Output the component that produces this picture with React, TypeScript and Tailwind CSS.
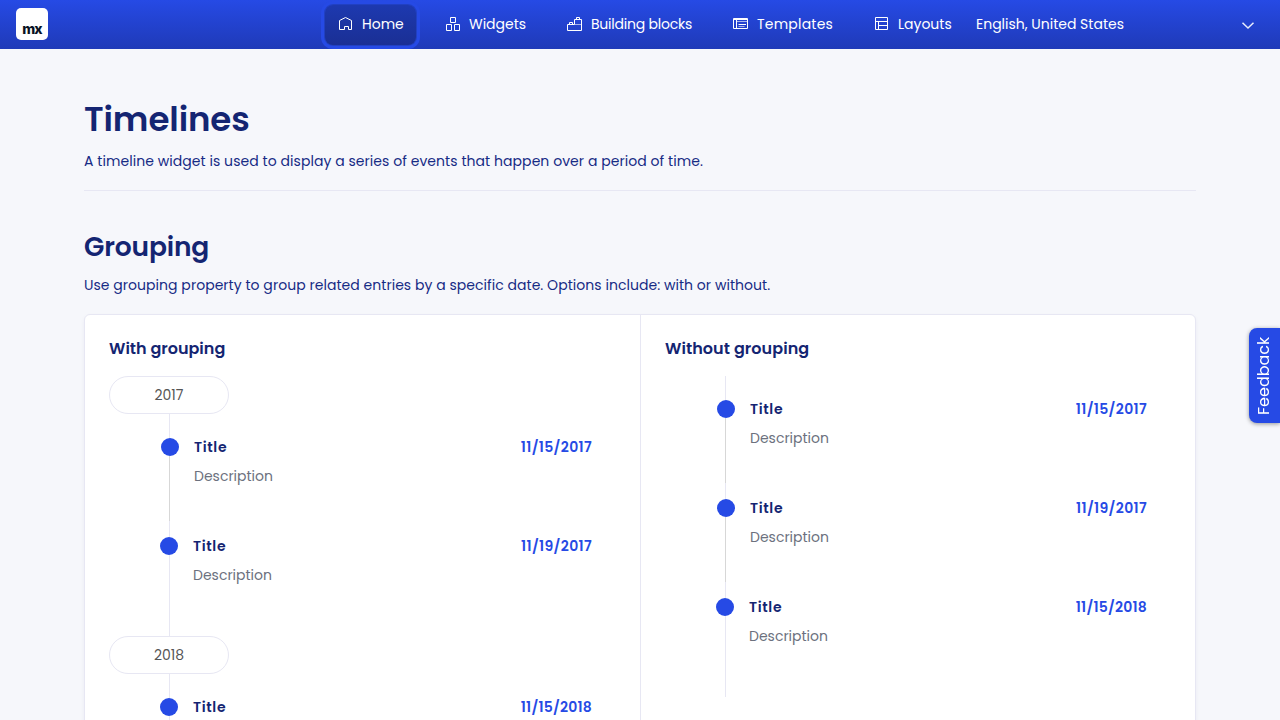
import type { ReactNode } from "react";

type Entry = { date: string; kind: "middle" | "last"; first?: boolean };

function Icon({ children, className = "w-[15px]" }: { children: ReactNode; className?: string }) {
  return (
    <svg className={`h-[14px] shrink-0 overflow-visible ${className}`} fill="none" stroke="#fff" strokeWidth="1" aria-hidden="true">
      {children}
    </svg>
  );
}

function TopBar() {
  return (
    <header className="flex h-[49px] items-start bg-linear-to-b from-[#264ae5] to-[#1f3ab8] text-sm text-white">
      <div className="mt-2 ml-4 flex size-8 shrink-0 items-end justify-center rounded-[5px] bg-white pb-[3px]">
        <span className="font-['Inter'] text-[14px] leading-[16px] font-extrabold tracking-[-1px] text-[#0a1325]">mx</span>
      </div>
      <nav className="flex h-[48px] items-center whitespace-nowrap">
        <a className="mt-[2px] ml-[277px] flex h-[40px] w-[91px] items-center gap-[9px] rounded-lg bg-linear-to-b from-[#1d39b0] to-[#1a2f94] pb-[2px] pl-[14px] shadow-[0_0_0_1px_#2140c2,0_0_0_4px_#264ae5]">
          <Icon className="w-[14px]">
            <path d="M.5 12.5v-9L6.500.5l6 3v9h-3v-3h-4v3z" />
          </Icon>
          <span>Home</span>
        </a>
        <a className="ml-[30px] flex w-[80px] items-center gap-[8px]">
          <Icon>
            <path d="M4.5.5h5v5h-5zM.5 7.5h5v6h-5zM8.5 7.5h5v6h-5z" />
          </Icon>
          <span>Widgets</span>
        </a>
        <a className="ml-[41px] flex w-[125px] items-center gap-[9px]">
          <Icon>
            <path d="M.5 13.5v-6h7v-5h7v11zM2.5 7.500v-2h3v2M9.500 2.5v-2h3v2" />
            <path d="M7.500 7.500h7" opacity=".6" />
          </Icon>
          <span className="tracking-[-0.22px]">Building blocks</span>
        </a>
        <a className="ml-[41px] flex w-[100px] items-center gap-[9px]">
          <Icon>
            <path d="M.5 1.5h14v10H.5zM.5 2.500h14M3.5 3v8M5.5 7.5h7.500" />
            <path d="M4 4.500h10M5.500 9.500h6" opacity=".6" />
          </Icon>
          <span className="tracking-[0.22px]">Templates</span>
        </a>
        <a className="ml-[42px] flex w-[77px] items-center gap-[9px]">
          <Icon className="w-[14px]">
            <path d="M.5.5h12v12H.5zM.5 4.500h12M3.500 4.500v8M3.500 8.500h9" />
          </Icon>
          <span>Layouts</span>
        </a>
        <span className="ml-[24px]">English, United States</span>
      </nav>
      <svg className="mt-[22px] mr-[26px] ml-auto h-[7px] w-3 overflow-visible" fill="none" stroke="#e9edfc" strokeWidth="1.5" aria-hidden="true">
        <path d="M.5.700 6 6l5.500-5.300" />
      </svg>
    </header>
  );
}

function GroupLabel({ year }: { year: string }) {
  return (
    <div className="flex h-[38px] w-[120px] items-center justify-center rounded-full border border-[#e7e7f3] text-sm text-[#555]">
      {year}
    </div>
  );
}

function TimelineItem({ date, kind, first }: Entry) {
  const middle = kind === "middle";
  return (
    <div className="flex">
      <div className="flex w-[18px] shrink-0 flex-col">
        <div className={`ml-[9px] w-px bg-[#e7e7f3] ${first ? "h-6" : "h-4"}`} />
        <div className={`size-[18px] shrink-0 rounded-full bg-[#264ae5] ${middle ? "ml-px" : ""}`} />
        <div className={`ml-[9px] w-px ${middle ? "h-[65px] bg-[#d7d7d7]" : "h-[81px] bg-[#e7e7f3]"}`} />
      </div>
      <div className={`flex-1 ${first ? "pt-[22px]" : "pt-[14px]"} ${middle ? "pl-4" : "pl-[15px]"}`}>
        <div className="flex h-[22px] items-center justify-between text-sm font-semibold">
          <span className="tracking-[0.65px] text-[#142572]">Title</span>
          <span className={`text-[#264ae5] ${date.endsWith("8") ? "tracking-[0.22px]" : "tracking-[0.35px]"}`}>{date}</span>
        </div>
        <p className="mt-[7px] text-sm leading-[22px] text-[#6c717e]">Description</p>
      </div>
    </div>
  );
}

function Entries({ items }: { items: Entry[] }) {
  return (
    <div className="pr-6 pl-[51px]">
      {items.map((item, i) => (
        <TimelineItem key={i} {...item} />
      ))}
    </div>
  );
}

export default function App() {
  return (
    <div className="h-screen overflow-hidden bg-[#f6f7fb] font-['Poppins','Inter',sans-serif] text-[#142572]">
      <TopBar />
      <main className="mx-auto w-[1112px] pt-[46px]">
        <h1 className="text-[34px] leading-[48px] font-semibold tracking-[-0.1px]">Timelines</h1>
        <p className="mt-[7px] text-sm leading-[22px] tracking-[0.056px] text-[#172b85]">
          A timeline widget is used to display a series of events that happen over a period of time.
        </p>
        <hr className="mt-[18px] border-[#e7e7f3]" />
        <h2 className="mt-[38px] text-[26.500px] leading-9 font-semibold tracking-[-0.15px]">Grouping</h2>
        <p className="mt-[9px] text-sm leading-[22px] tracking-[0.04px] text-[#172b85]">
          Use grouping property to group related entries by a specific date. Options include: with or without.
        </p>
        <div className="mt-[18px] grid h-[520px] grid-cols-[556px_1fr] rounded-md border border-[#e7e7f3] bg-white shadow-[0_2px_4px_rgba(20,37,114,0.05)]">
          <section className="border-r border-[#e7e7f3] px-6 pt-[22px]">
            <h3 className="mb-[15px] text-base leading-6 font-semibold">With grouping</h3>
            <GroupLabel year="2017" />
            <Entries
              items={[
                { date: "11/15/2017", kind: "middle", first: true },
                { date: "11/19/2017", kind: "last" },
              ]}
            />
            <GroupLabel year="2018" />
            <Entries items={[{ date: "11/15/2018", kind: "last", first: true }]} />
          </section>
          <section className="px-6 pt-[22px]">
            <h3 className="mb-[15px] text-base leading-6 font-semibold tracking-[0.06px]">Without grouping</h3>
            <Entries
              items={[
                { date: "11/15/2017", kind: "middle", first: true },
                { date: "11/19/2017", kind: "middle" },
                { date: "11/15/2018", kind: "last" },
              ]}
            />
          </section>
        </div>
      </main>
      <button className="fixed top-[328px] right-0 flex h-[95px] w-[31px] rotate-180 items-center justify-center rounded-r-lg bg-[#264ae5] text-base text-white shadow-[0_-1px_4px_rgba(0,0,0,0.4)] [writing-mode:vertical-rl]">
        Feedback
      </button>
    </div>
  );
}
